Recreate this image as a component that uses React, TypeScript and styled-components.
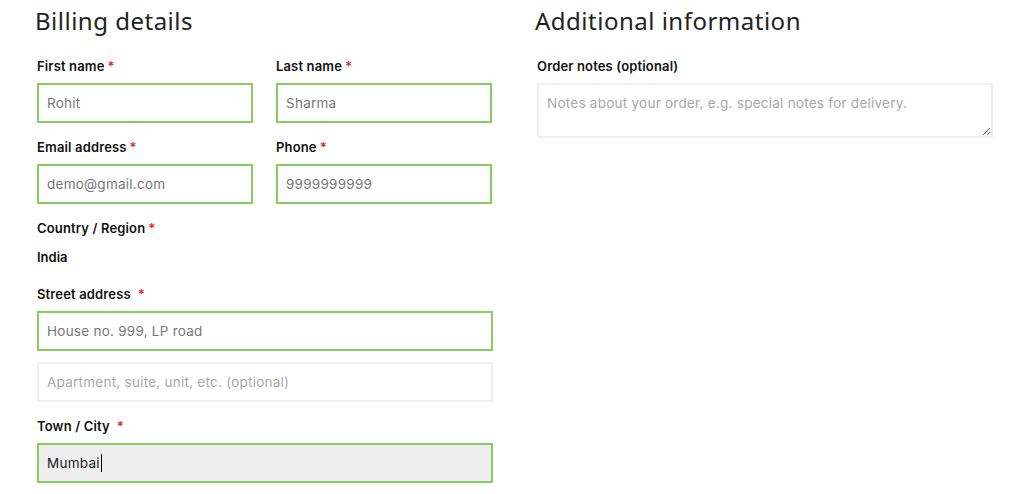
import React from "react";
import styled, { createGlobalStyle } from "styled-components";

const GlobalStyle = createGlobalStyle`
  body {
    margin: 0;
    background: #ffffff;
    font-family: Inter, "Noto Sans", sans-serif;
  }
`;

const Page = styled.div`
  display: grid;
  grid-template-columns: 456px 456px;
  column-gap: 44px;
  padding: 6px 0 0 37px;
`;

const Column = styled.section`
  display: flex;
  flex-direction: column;
`;

const Heading = styled.h3`
  margin: 0 0 20px -2px;
  font-family: "Noto Sans", sans-serif;
  font-size: 24px;
  font-weight: 400;
  letter-spacing: 0.5px;
  line-height: 30px;
  color: #222;
`;

const Fields = styled.div`
  display: flex;
  flex-direction: column;
  gap: 14px;
`;

const Row = styled.div`
  display: grid;
  grid-template-columns: 216px 216px;
  column-gap: 23px;
`;

const Field = styled.div`
  display: flex;
  flex-direction: column;
`;

const Label = styled.label`
  font-size: 13px;
  font-weight: 600;
  letter-spacing: 0.15px;
  line-height: 20px;
  color: #111;
  margin-bottom: 7px;
`;

const Star = styled.span<{ $wide?: boolean }>`
  color: #e2231a;
  margin-left: ${(p) => (p.$wide ? "7px" : "3px")};
`;

const Value = styled.div`
  font-size: 13px;
  font-weight: 600;
  line-height: 20px;
  color: #111;
  margin: 2px 0 3px;
`;

const Input = styled.input<{ $valid?: boolean }>`
  box-sizing: border-box;
  width: 100%;
  height: 40px;
  padding: 0 8px;
  border: 2px solid ${(p) => (p.$valid ? "#86cf5c" : "#efefef")};
  background: #ffffff;
  font-family: inherit;
  font-size: 13.5px;
  letter-spacing: 0.25px;
  color: #777;
  outline: none;
  &::placeholder {
    color: #a8a8a8;
  }
`;

/* the focused field, drawn with its caret */
const ActiveField = styled.div`
  box-sizing: border-box;
  display: flex;
  align-items: center;
  height: 40px;
  padding: 0 8px;
  border: 2px solid #86cf5c;
  background: #eeeeee;
  font-size: 13.5px;
  letter-spacing: 0.25px;
  color: #222;
`;

const Caret = styled.span`
  display: inline-block;
  width: 1px;
  height: 18px;
  margin-left: 1px;
  background: #000;
`;

const Notes = styled.textarea`
  box-sizing: border-box;
  width: 100%;
  height: 55px;
  padding: 10px 8px;
  border: 2px solid #efefef;
  font-family: inherit;
  font-size: 13.5px;
  letter-spacing: 0.25px;
  resize: vertical;
  outline: none;
  &::placeholder {
    color: #a8a8a8;
  }
`;

const Stack = styled.div`
  display: flex;
  flex-direction: column;
  gap: 11px;
`;

const Req = ({ wide }: { wide?: boolean }) => <Star $wide={wide}>*</Star>;

export default function App() {
  return (
    <>
      <GlobalStyle />
      <Page>
        <Column>
          <Heading>Billing details</Heading>
          <Fields>
            <Row>
              <Field>
                <Label>
                  First name<Req />
                </Label>
                <Input $valid defaultValue="Rohit" />
              </Field>
              <Field>
                <Label>
                  Last name<Req />
                </Label>
                <Input $valid defaultValue="Sharma" />
              </Field>
            </Row>
            <Row>
              <Field>
                <Label>
                  Email address<Req />
                </Label>
                <Input $valid defaultValue="demo@gmail.com" />
              </Field>
              <Field>
                <Label>
                  Phone<Req />
                </Label>
                <Input $valid defaultValue="9999999999" />
              </Field>
            </Row>
            <Field>
              <Label>
                Country / Region<Req />
              </Label>
              <Value>India</Value>
            </Field>
            <Field>
              <Label>
                Street address<Req wide />
              </Label>
              <Stack>
                <Input $valid defaultValue="House no. 999, LP road" />
                <Input placeholder="Apartment, suite, unit, etc. (optional)" />
              </Stack>
            </Field>
            <Field>
              <Label>
                Town / City<Req wide />
              </Label>
              <ActiveField>
                Mumbai
                <Caret />
              </ActiveField>
            </Field>
          </Fields>
        </Column>
        <Column>
          <Heading>Additional information</Heading>
          <Field>
            <Label>Order notes (optional)</Label>
            <Notes placeholder="Notes about your order, e.g. special notes for delivery." />
          </Field>
        </Column>
      </Page>
    </>
  );
}
